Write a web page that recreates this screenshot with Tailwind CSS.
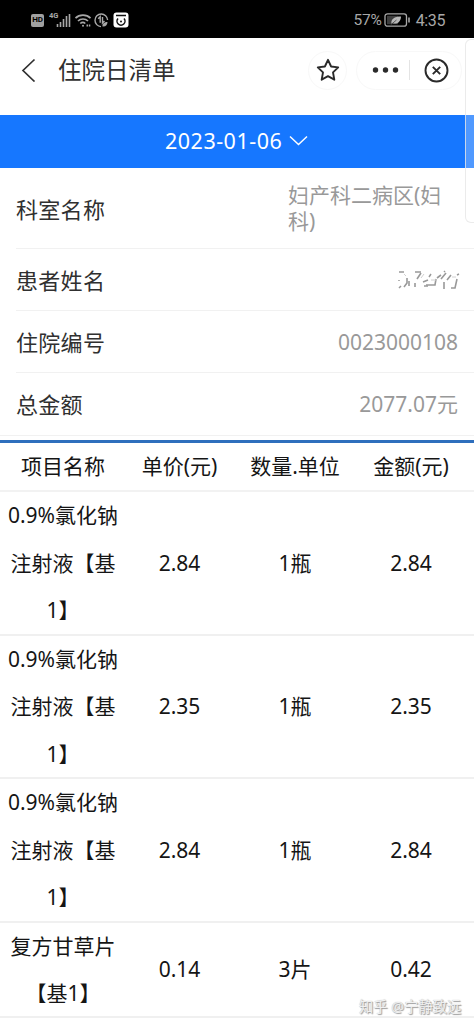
<!DOCTYPE html>
<html lang="zh-CN">
<head>
  <meta charset="UTF-8" />
  <meta name="viewport" content="width=device-width, initial-scale=1.0" />
  <title>住院日清单</title>
  <script src="https://cdn.jsdelivr.net/npm/@tailwindcss/browser@4"></script>
</head>
<body class="relative h-[1027px] overflow-hidden bg-white font-['Noto_Sans','Noto_Sans_CJK_SC',sans-serif] text-[#303030]">

  <!-- 状态栏 -->
  <header class="flex h-[38px] items-center justify-between bg-black pl-[31px] pr-[29px] pt-[2px] text-[#a8a8a8]">
    <div class="flex items-center">
      <span class="flex h-[13px] w-[13px] items-center justify-center rounded-[2px] bg-[#a0a0a0] font-[Roboto] text-[8px] font-bold leading-none tracking-tight text-black">HD</span>
      <svg class="ml-[5px] h-[18px] w-[23px]" viewBox="0 0 23 18">
        <text x="0" y="7" font-family="Roboto" font-size="7.500" font-weight="700" fill="#a8a8a8">4G</text>
        <path d="M8.500 16v-3M11.500 16v-5M14.500 16v-8M17.500 16V5M20.500 16V3" stroke="#a8a8a8" stroke-width="1.600" />
      </svg>
      <svg class="ml-[2px] h-[16px] w-[18px]" viewBox="0 0 18 16" fill="none" stroke="#a8a8a8" stroke-width="1.700">
        <path d="M1.500 6.200c4-4 11-4 15 0M4 9c2.700-2.700 7.300-2.700 10 0M6.300 11.500c1.500-1.400 3.500-1.400 5 0" />
        <circle cx="9" cy="13.700" r="1" fill="#a8a8a8" stroke="none" />
        <path d="M12.500 13.500h4" stroke-width="2" stroke-dasharray="1.500 .8" />
      </svg>
      <svg class="ml-[2px] h-[15px] w-[15px]" viewBox="0 0 15 15" fill="none" stroke="#a8a8a8" stroke-width="1.400">
        <path d="M13.600 7A6.300 6.300 0 1 0 7 13.600" />
        <path d="M4.200 5.800l2-2v6M8.500 4v6l2-2" />
        <path d="M8.500 13.500c-.5-3 2-4.500 5-4.500 0 3-2 5-5 4.500z" fill="#a8a8a8" stroke="none" />
      </svg>
      <svg class="ml-[4px] h-[16px] w-[16px]" viewBox="0 0 16 16" fill="none" stroke="#111" stroke-width="1.500">
        <rect x=".5" y=".5" width="15" height="15" rx="3" fill="#fff" stroke="none" />
        <path d="M3 3.500h10M5 6.500A4 4 0 1 0 11 6.500" />
        <circle cx="8" cy="9.500" r="1" fill="#111" stroke="none" />
      </svg>
    </div>
    <div class="flex items-center font-[Roboto] text-base leading-none">
      <span class="pt-[2px] text-[15.5px] tracking-[-0.2px]">57%</span>
      <svg class="ml-[2px] h-[14px] w-[27px]" viewBox="0 0 27 14" fill="none">
        <rect x="1" y=".8" width="21.500" height="12.400" rx="2.500" stroke="#a8a8a8" stroke-width="1.300" />
        <rect x="3" y="2.800" width="11" height="8.400" fill="#3d3d3d" />
        <path d="M25 4.500v5" stroke="#a8a8a8" stroke-width="1.600" />
        <path d="M7.500 11c-1-5 3-7.500 9.500-7.500C17 8.500 13 12 8.500 10z" fill="#b8b8b8" />
        <path d="M6.500 12l6-5" stroke="#444" stroke-width=".8" />
      </svg>
      <span class="ml-[5px] pt-[2px] tracking-[-0.4px]">4:35</span>
    </div>
  </header>

  <!-- 导航栏 -->
  <nav class="flex h-[77px] items-center pb-[13px] pl-[21px]">
    <svg class="h-[24px] w-[15px]" viewBox="0 0 15 24" fill="none" stroke="#303030" stroke-width="1.700">
      <path d="M13.500 1.500L2 12.500l11.500 11" />
    </svg>
    <h1 class="ml-[22px] w-[250px] pt-[2px] text-[23.5px] leading-none">住院日清单</h1>
    <div class="flex h-[39px] w-[39px] items-center justify-center rounded-full border border-[#f8f8f8]">
      <svg class="h-[24px] w-[24px]" viewBox="0 0 24 24" fill="none" stroke="#2a2a2a" stroke-width="1.900" stroke-linejoin="round">
        <path d="M12 1.800l3.100 6.700 7.100.9-5.200 5 1.300 7.300-6.300-3.500-6.300 3.500L7 14.400l-5.200-5 7.100-.9z" />
      </svg>
    </div>
    <div class="ml-[9px] flex h-[39px] w-[106px] items-center rounded-full border border-[#f8f8f8] pl-[15px]">
      <svg class="h-[6px] w-[27px]" viewBox="0 0 27 6" fill="#2a2a2a">
        <circle cx="3.500" cy="3" r="2.700" /><circle cx="13.500" cy="3" r="2.700" /><circle cx="23.500" cy="3" r="2.700" />
      </svg>
      <span class="ml-[10px] h-[20px] w-px bg-[#e4e4e4]"></span>
      <svg class="ml-[14px] h-[25px] w-[25px]" viewBox="0 0 25 25" fill="none" stroke="#2a2a2a" stroke-width="1.900">
        <circle cx="12.500" cy="12.500" r="11" />
        <path d="M8.800 8.800l7.400 7.400M16.200 8.800l-7.400 7.400" />
      </svg>
    </div>
  </nav>

  <!-- 日期 -->
  <div class="flex h-[53px] items-center bg-[#1677ff] pb-[2px] pl-[165px] text-white">
    <span class="text-[21.5px] leading-none tracking-[0.5px]">2023-01-06</span>
    <svg class="ml-[7px] h-[11px] w-[19px]" viewBox="0 0 19 11" fill="none" stroke="#fff" stroke-width="1.500">
      <path d="M1 1.500l8.500 8L18 1.500" />
    </svg>
  </div>

  <!-- 患者信息 -->
  <section class="pl-4 text-[22px]">
    <div class="flex h-[81px] items-center justify-between border-b border-[#f1f1f1] pr-4">
      <span class="pt-[2px] tracking-[0.3px]">科室名称</span>
      <span class="w-[170px] text-[21px] leading-[26px] text-[#999]">妇产科二病区(妇<br>科)</span>
    </div>
    <div class="flex h-[62px] items-center justify-between border-b border-[#f1f1f1] pr-[13px]">
      <span class="pt-[2px] tracking-[0.3px]">患者姓名</span>
      <svg class="h-[22px] w-[66px]" viewBox="0 0 66 22" fill="none" stroke="#999">
        <path d="M4 3h5M4 11v1M4 19l2-2M20 3h6M36 5l-2 3M29 17h4M49 3l1-1M62 6l2-1" stroke-width="1.500" />
        <path d="M12 9v5l-3 4M14 12v5M26 4l-4 6M20 14v4M28 13l5-2M31 16h9l1-6M42 9l4-3M51 4l-5 6M49 13v7M56 6l-4 5M62 10l-2 9h-4" stroke-width="1.600" />
        <path d="M9 5l2 2M29 5l-3 4M36 11h5M57 8h4" stroke="#d0d0d0" />
      </svg>
    </div>
    <div class="flex h-[62px] items-center justify-between border-b border-[#f1f1f1] pr-4">
      <span class="pt-[2px] tracking-[0.3px]">住院编号</span>
      <span class="pt-[2px] text-[21px] text-[#999]">0023000108</span>
    </div>
    <div class="flex h-[62px] items-center justify-between pr-4">
      <span class="tracking-[0.3px]">总金额</span>
      <span class="pt-[2px] text-[21px] text-[#999]">2077.07元</span>
    </div>
  </section>

  <!-- 费用明细 -->
  <section class="border-t border-[#f1f1f1] pt-[4px] text-center text-[21px] leading-[47.5px] text-[#151515]">
    <div class="grid h-[52px] grid-cols-[126px_107px_124px_108px] items-center border-b-2 border-t-[3px] border-b-[#f2f2f2] border-t-[#2e6fbd]">
      <span>项目名称</span><span>单价(元)</span><span>数量.单位</span><span>金额(元)</span>
    </div>
    <div class="grid h-[143.5px] grid-cols-[126px_107px_124px_108px] items-center border-b-2 border-[#f0f0f0]">
      <span>0.9%氯化钠<br>注射液【基<br>1】</span><span>2.84</span><span>1瓶</span><span>2.84</span>
    </div>
    <div class="grid h-[143.5px] grid-cols-[126px_107px_124px_108px] items-center border-b-2 border-[#f0f0f0]">
      <span>0.9%氯化钠<br>注射液【基<br>1】</span><span>2.35</span><span>1瓶</span><span>2.35</span>
    </div>
    <div class="grid h-[143.5px] grid-cols-[126px_107px_124px_108px] items-center border-b-2 border-[#f0f0f0]">
      <span>0.9%氯化钠<br>注射液【基<br>1】</span><span>2.84</span><span>1瓶</span><span>2.84</span>
    </div>
    <div class="grid h-[95.5px] grid-cols-[126px_107px_124px_108px] items-center border-b-2 border-[#f0f0f0]">
      <span>复方甘草片<br>【基1】</span><span>0.14</span><span>3片</span><span>0.42</span>
    </div>
  </section>

  <!-- 右侧边栏把手 -->
  <div class="absolute left-[465px] top-[39px] h-[184px] w-[20px] rounded-l-[6px] border border-[#e6e6e6]/80 bg-white/25"></div>

  <!-- 水印 -->
  <div class="absolute left-[359px] top-[997px] whitespace-nowrap text-[14.3px] leading-[20px] text-[#f0f0f0] [text-shadow:1px_1px_1px_#999,0_0_1px_#aaa]">知乎 @宁静致远</div>

</body>
</html>
